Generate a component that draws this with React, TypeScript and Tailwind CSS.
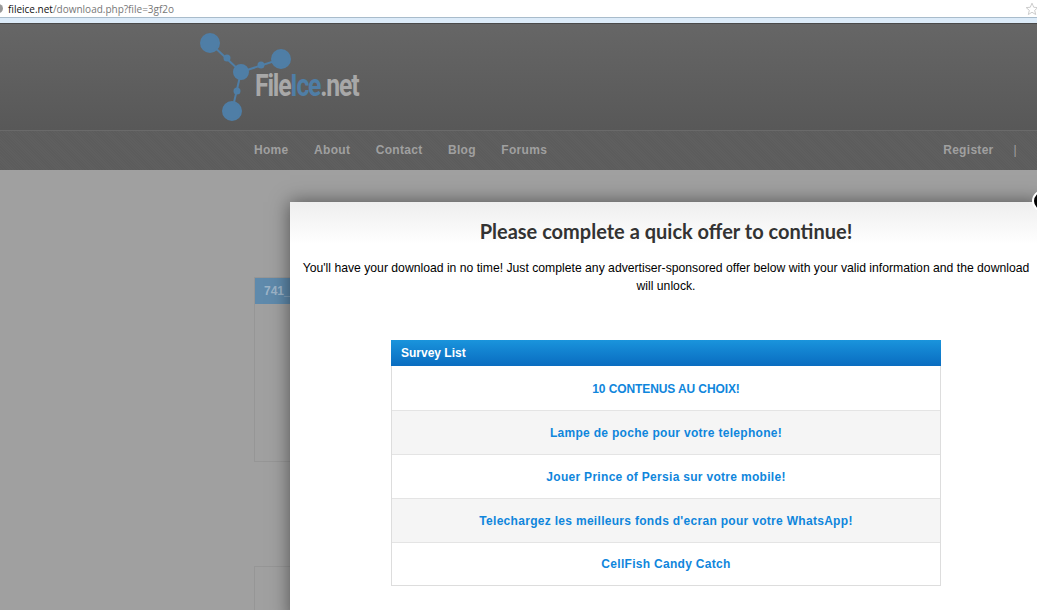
import React from "react";

const OFFERS = [
  "10 CONTENUS AU CHOIX!",
  "Lampe de poche pour votre telephone!",
  "Jouer Prince of Persia sur votre mobile!",
  "Telechargez les meilleurs fonds d'ecran pour votre WhatsApp!",
  "CellFish Candy Catch",
];

const NAV = ["Home", "About", "Contact", "Blog", "Forums"];

const Logo = () => (
  <svg width="170" height="100" viewBox="0 0 170 100" className="absolute left-[195px] top-[6px]">
    <g stroke="#4f7ea6" strokeWidth="2" fill="#4f7ea6">
      <line x1="15" y1="13" x2="46" y2="42" />
      <line x1="46" y1="42" x2="86" y2="29" />
      <line x1="46" y1="42" x2="37" y2="81" />
      <circle cx="15" cy="13" r="9" />
      <circle cx="32" cy="28" r="2.5" />
      <circle cx="46" cy="42" r="7" />
      <circle cx="66" cy="35" r="2.5" />
      <circle cx="86" cy="29" r="9" />
      <circle cx="42" cy="61" r="2.5" />
      <circle cx="37" cy="81" r="9" />
    </g>
  </svg>
);

export default function App() {
  return (
    <div className="relative w-[1037px] h-[610px] overflow-hidden bg-[#a0a0a0] font-['Liberation_Sans',sans-serif]">
      {/* browser bar */}
      <div className="h-[18px] bg-white border-b border-[#a9bccb] flex items-center justify-between pr-0">
        <div className="flex items-center gap-[5px] ml-[-6px]">
          <span className="w-[9px] h-[9px] rounded-full bg-[#999]" />
          <div className="text-[10px] leading-none font-['Open_Sans',sans-serif] text-[#777]">
            <span className="text-[#111]">fileice.net</span>/download.php?file=3gf2o
          </div>
        </div>
        <svg width="14" height="14" viewBox="0 0 24 24" fill="none" stroke="#c8c8c8" strokeWidth="1.6" className="mr-[-2px]">
          <path d="M12 2l3 7 7 .6-5.4 4.7 1.7 7.2L12 17.6l-6.3 3.9 1.7-7.2L2 9.6 9 9z" />
        </svg>
      </div>
      <div className="h-[5px] bg-[#dcebf9]" />
      <div className="h-px bg-[#4a4a4a]" />

      {/* site header */}
      <div className="relative h-[106px] bg-gradient-to-b from-[#666666] to-[#585858]">
        <Logo />
        <div className="absolute left-[255px] top-[44px] text-[31px] leading-[36px] font-bold tracking-[-1.5px] font-['Roboto',sans-serif] scale-x-[0.8] origin-left text-[#a8a8a8]">
          File<span className="text-[#4f7ea6]">Ice</span>.net
        </div>
      </div>

      {/* nav */}
      <div className="h-[40px] pb-[2px] bg-[repeating-linear-gradient(45deg,#5c5c5c_0px,#5c5c5c_1px,#5f5f5f_1px,#5f5f5f_2px)] border-t border-[#6a6a6a] flex items-center pl-[254px] text-[12px] font-bold tracking-[0.3px] text-[#a0a0a0]">
        <div className="flex gap-[25.5px]">
          {NAV.map((n) => (
            <span key={n}>{n}</span>
          ))}
        </div>
        <span className="ml-[396px]">Register</span>
        <span className="ml-[20px] font-normal">|</span>
      </div>

      {/* page behind the overlay */}
      <div className="pl-[254px] pt-[107px] w-[340px]">
        <div className="border border-[#969696] h-[185px]">
          <div className="h-[26px] bg-[#5f8aac] text-[#9db4c8] text-[12px] font-bold pl-[9px] leading-[26px]">741_</div>
        </div>
        <div className="border border-[#969696] h-[60px] mt-[104px]" />
      </div>

      {/* offer modal */}
      <div className="absolute left-[290px] top-[202px] w-[752px] h-[420px] bg-white shadow-[0_0_18px_rgba(0,0,0,0.5)]">
        <div className="h-[42px] pt-[16px] bg-gradient-to-b from-[#eeeeee] to-white">
          <h1 className="text-center text-[20px] leading-[26px] font-bold text-[#333] font-['Lato',sans-serif]">
            Please complete a quick offer to continue!
          </h1>
        </div>
        <p className="mt-[15px] px-[10px] text-center text-[12.2px] leading-[18px] text-black">
          You'll have your download in no time! Just complete any advertiser-sponsored offer below with your valid information and the download will unlock.
        </p>
        <div className="mt-[45px] ml-[101px] w-[550px]">
          <div className="h-[26px] bg-gradient-to-b from-[#1a94dc] to-[#0a6cc0] text-white text-[12px] font-bold pl-[10px] leading-[26px]">
            Survey List
          </div>
          <div className="border border-t-0 border-[#dddddd]">
            {OFFERS.map((o, i) => (
              <div
                key={o}
                className={`flex items-center justify-center text-[12px] font-bold text-[#0f86dc] ${i === 0 ? "tracking-[-0.1px] pt-[1px]" : "tracking-[0.3px]"} ${i === 4 ? "h-[43px]" : "h-[44px]"} ${i % 2 === 1 ? "bg-[#f5f5f5]" : "bg-white"} ${i > 0 ? "border-t border-[#e4e4e4]" : ""}`}
              >
                {o}
              </div>
            ))}
          </div>
        </div>
      </div>

      {/* close button */}
      <div className="absolute left-[1032px] top-[190px] w-[22px] h-[22px] rounded-full bg-black border-2 border-white" />
    </div>
  );
}
